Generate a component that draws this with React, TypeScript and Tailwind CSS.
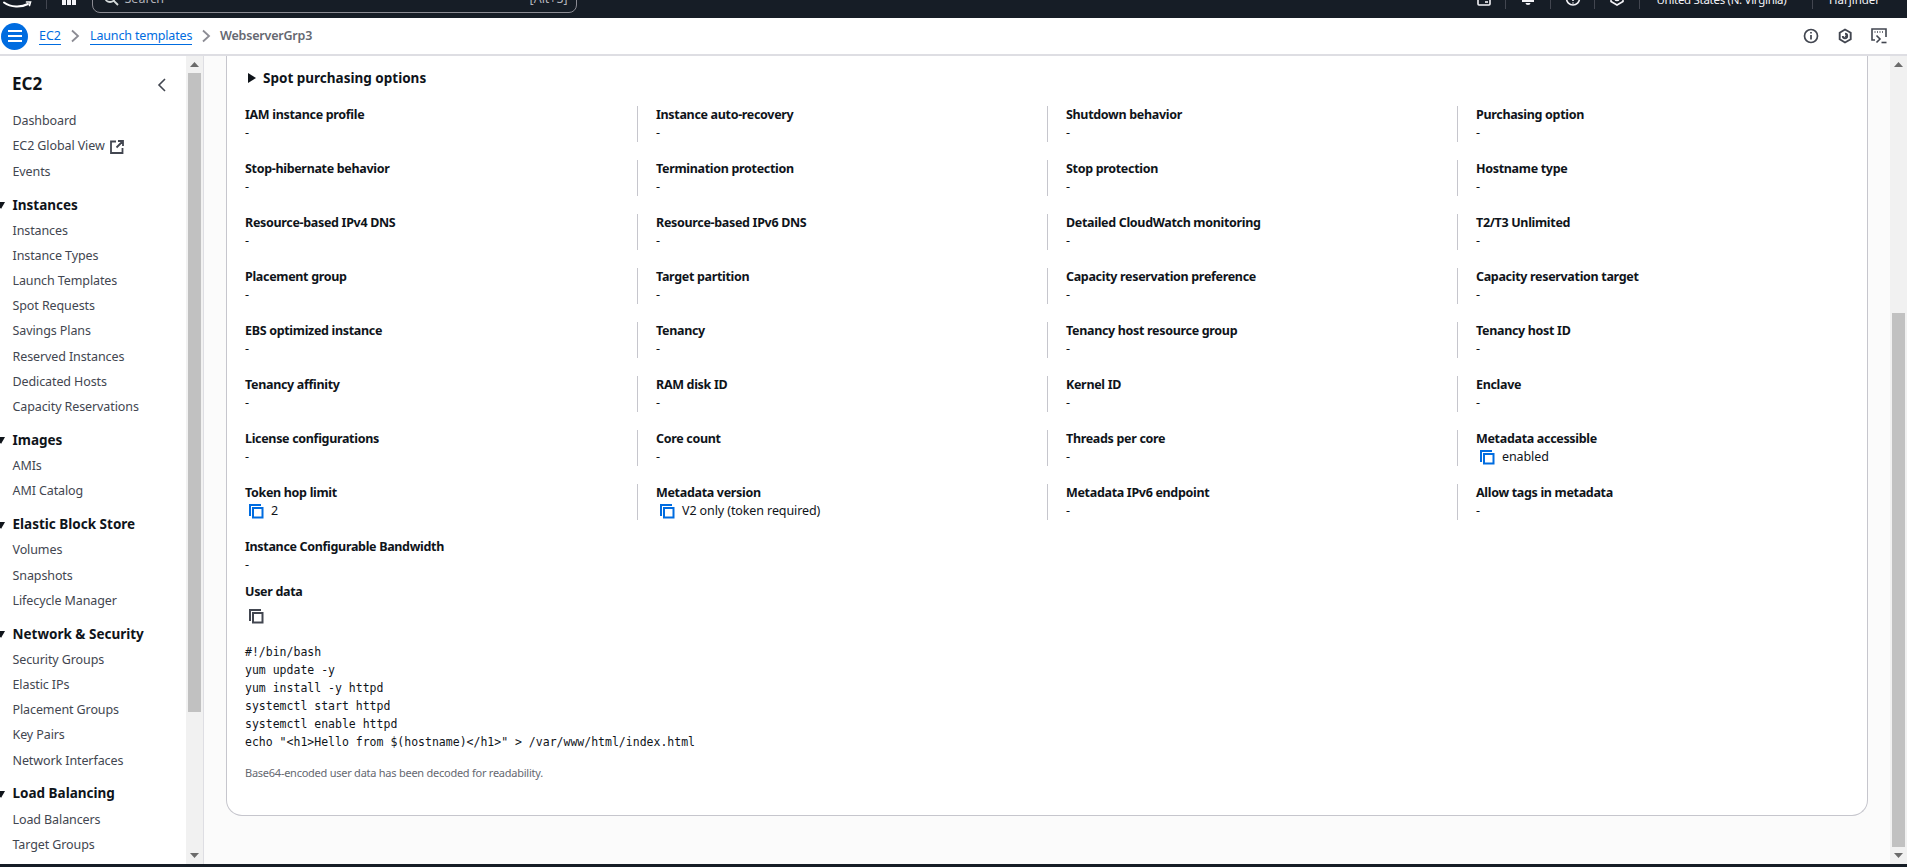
import React from "react";

const sans = "font-['Noto_Sans','Open_Sans',sans-serif]";

const Copy = ({ color = "#006ce0" }: { color?: string }) => (
  <svg width="16" height="16" viewBox="0 0 16 16" fill="none" stroke={color} strokeWidth="2" className="shrink-0">
    <path d="M2 13V2h11" />
    <rect x="5" y="5" width="9.5" height="9.5" />
  </svg>
);

const Tri = () => (
  <svg width="8" height="8" viewBox="0 0 8 8" className="absolute left-[-3px] top-[9px]">
    <path d="M0 1h8L4 8z" fill="#0f141a" />
  </svg>
);

const Arrow = ({ up }: { up?: boolean }) => (
  <svg width="9" height="5" viewBox="0 0 9 5">
    <path d={up ? "M4.5 0L9 5H0z" : "M0 0h9L4.5 5z"} fill="#6b6b6b" />
  </svg>
);

const Chevron = () => (
  <svg width="10" height="14" viewBox="0 0 10 14" fill="none" stroke="#8c8c94" strokeWidth="1.8" className="shrink-0">
    <path d="M2 1.5L8 7l-6 5.5" />
  </svg>
);

const NavItem = ({ label, ext }: { label: string; ext?: boolean }) => (
  <div className="flex h-[25.2px] items-center gap-[5px] whitespace-nowrap pl-[12.5px] text-[12.5px] tracking-[-0.1px] text-[#424650]">
    {label}
    {ext && (
      <svg width="14" height="14" viewBox="0 0 14 14" fill="none" stroke="#424650" strokeWidth="1.8">
        <path d="M6 1.5H1v11.5h11.5V8M8 1h5v5M13 1L6.5 7.5" />
      </svg>
    )}
  </div>
);

const sections: { title: string; items: string[] }[] = [
  { title: "Instances", items: ["Instances", "Instance Types", "Launch Templates", "Spot Requests", "Savings Plans", "Reserved Instances", "Dedicated Hosts", "Capacity Reservations"] },
  { title: "Images", items: ["AMIs", "AMI Catalog"] },
  { title: "Elastic Block Store", items: ["Volumes", "Snapshots", "Lifecycle Manager"] },
  { title: "Network & Security", items: ["Security Groups", "Elastic IPs", "Placement Groups", "Key Pairs", "Network Interfaces"] },
  { title: "Load Balancing", items: ["Load Balancers", "Target Groups", "Trust Stores"] },
];

type Cell = { label: string; value?: string; copy?: boolean };

const cells: Cell[] = [
  { label: "IAM instance profile" }, { label: "Instance auto-recovery" }, { label: "Shutdown behavior" }, { label: "Purchasing option" },
  { label: "Stop-hibernate behavior" }, { label: "Termination protection" }, { label: "Stop protection" }, { label: "Hostname type" },
  { label: "Resource-based IPv4 DNS" }, { label: "Resource-based IPv6 DNS" }, { label: "Detailed CloudWatch monitoring" }, { label: "T2/T3 Unlimited" },
  { label: "Placement group" }, { label: "Target partition" }, { label: "Capacity reservation preference" }, { label: "Capacity reservation target" },
  { label: "EBS optimized instance" }, { label: "Tenancy" }, { label: "Tenancy host resource group" }, { label: "Tenancy host ID" },
  { label: "Tenancy affinity" }, { label: "RAM disk ID" }, { label: "Kernel ID" }, { label: "Enclave" },
  { label: "License configurations" }, { label: "Core count" }, { label: "Threads per core" }, { label: "Metadata accessible", value: "enabled", copy: true },
  { label: "Token hop limit", value: "2", copy: true }, { label: "Metadata version", value: "V2 only (token required)", copy: true }, { label: "Metadata IPv6 endpoint" }, { label: "Allow tags in metadata" },
  { label: "Instance Configurable Bandwidth" },
];

const Detail = ({ cell, index }: { cell: Cell; index: number }) => (
  <div className={index % 4 === 0 ? "h-[36px]" : "h-[36px] border-l border-[#c6c6cd] pl-[18px]"}>
    <div className="h-[18px] whitespace-nowrap text-[12.5px] font-bold leading-[18px] tracking-[-0.32px] text-[#0f141a]">{cell.label}</div>
    {cell.copy ? (
      <div className="flex h-[18px] items-center gap-[7px] pl-[3px] text-[12.5px] leading-[18px] tracking-[-0.1px] text-[#0f141a]">
        <Copy />
        {cell.value}
      </div>
    ) : (
      <div className="h-[18px] text-[12.5px] leading-[18px] text-[#0f141a]">-</div>
    )}
  </div>
);

const code = [
  "#!/bin/bash",
  "yum update -y",
  "yum install -y httpd",
  "systemctl start httpd",
  "systemctl enable httpd",
  'echo "<h1>Hello from $(hostname)</h1>" > /var/www/html/index.html',
];

const TopCell = ({ w, children }: { w: string; children: React.ReactNode }) => (
  <div className={`flex h-[22px] items-center justify-center border-r border-[#424650] ${w}`}>{children}</div>
);

export default function App() {
  return (
    <div className={`flex h-screen flex-col overflow-hidden bg-white ${sans}`}>
      {/* top navigation, scrolled mostly out of the photo */}
      <header className="h-[18px] shrink-0 overflow-hidden bg-[#161d26]">
        <div className="-mt-[17px] flex h-[30px] items-center text-[12.5px] text-[#d5dbdb]">
          <svg width="30" height="30" viewBox="0 -1 30 30" fill="none" className="ml-[2px] shrink-0">
            <path d="M2 18.5c7 5 17 5 24 1.5" stroke="#fff" strokeWidth="2" strokeLinecap="round" />
            <path d="M24.5 18h4l-1 3.5" stroke="#fff" strokeWidth="1.6" strokeLinecap="round" />
          </svg>
          <div className="ml-[13.5px] h-[22px] w-px bg-[#424650]" />
          <svg width="14" height="22" viewBox="0 0 14 22" fill="#f3f3f7" className="ml-[15px] shrink-0">
            <rect x="0" y="7" width="4" height="4" /><rect x="5" y="7" width="4" height="4" /><rect x="10" y="7" width="4" height="4" />
            <rect x="0" y="13" width="4" height="5" /><rect x="5" y="13" width="4" height="5" /><rect x="10" y="13" width="4" height="5" />
          </svg>
          <div className="ml-[16px] flex h-full w-[485px] items-center rounded-lg border border-[#8c8c94] pl-[10px] pr-[8px]">
            <svg width="16" height="16" viewBox="0 0 16 16" fill="none" stroke="#d5dbdb" strokeWidth="1.8">
              <circle cx="7" cy="7" r="5" />
              <path d="M10.5 10.5L15 15" />
            </svg>
            <span className="ml-[6px] mt-[3px] text-[#b4b4bb]">Search</span>
            <span className="ml-auto mt-[3px] text-[#b4b4bb]">[Alt+S]</span>
          </div>
          <TopCell w="ml-auto w-[43px]">
            <svg width="14" height="22" viewBox="0 -2 14 22" fill="none" stroke="#f3f3f7" strokeWidth="1.6"><rect x="1" y="4" width="12" height="12" rx="1" /><path d="M8 13h3" /></svg>
          </TopCell>
          <TopCell w="w-[45px]">
            <svg width="16" height="22" viewBox="0 -2 16 22" fill="#f3f3f7"><path d="M2 10h12v3H2z" /><path d="M5.5 14h5a2.5 2 0 0 1-5 0z" /></svg>
          </TopCell>
          <TopCell w="w-[44px]">
            <svg width="16" height="22" viewBox="0 -3.5 16 22" fill="none" stroke="#f3f3f7" strokeWidth="1.6"><circle cx="8" cy="8" r="6.5" /><path d="M8 9v1.5M8 12v1" /></svg>
          </TopCell>
          <TopCell w="w-[45px]">
            <svg width="16" height="22" viewBox="0 -3 16 22" fill="none" stroke="#f3f3f7" strokeWidth="1.6"><path d="M8 1.5l6 3.5v6.5l-6 3.5-6-3.5V5z" /><circle cx="8" cy="8.5" r="2" /></svg>
          </TopCell>
          <TopCell w="w-[173px]">
            <span className="mt-[3px] w-[127px] whitespace-nowrap text-[11.5px] tracking-[-0.3px] text-[#f3f3f7]">United States (N. Virginia)</span>
            <span className="ml-[6px] h-0 w-0 border-x-[3.5px] border-t-[4px] border-x-transparent border-t-[#f3f3f7]" />
          </TopCell>
          <div className="flex items-center pl-[16px] pr-[17px]">
            <span className="mt-[3px] w-[49px] text-[11.5px] text-[#f3f3f7]">Harjinder</span>
            <span className="ml-[6px] h-0 w-0 border-x-[3.5px] border-t-[4px] border-x-transparent border-t-[#f3f3f7]" />
          </div>
        </div>
      </header>

      {/* breadcrumb bar */}
      <div className="flex h-[38px] shrink-0 items-center border-b-2 border-[#dedee3] bg-white">
        <div className="ml-px flex h-[27px] w-[27px] flex-col items-center justify-center gap-[3px] rounded-full bg-[#006ce0]">
          <span className="h-[2px] w-[14px] bg-white" />
          <span className="h-[2px] w-[14px] bg-white" />
          <span className="h-[2px] w-[14px] bg-white" />
        </div>
        <span className="ml-[11px] w-[22px] border-b border-[#006ce0] text-[12.5px] leading-[16px] text-[#006ce0]">EC2</span>
        <span className="ml-[9px]"><Chevron /></span>
        <span className="ml-[10px] w-[102px] whitespace-nowrap border-b border-[#006ce0] text-[12.5px] leading-[16px] tracking-[-0.15px] text-[#006ce0]">Launch templates</span>
        <span className="ml-[9px]"><Chevron /></span>
        <span className="ml-[9px] whitespace-nowrap text-[12.5px] font-semibold tracking-[-0.2px] text-[#656871]">WebserverGrp3</span>
        <div className="ml-auto flex items-center gap-[16px] pr-[19px]">
          <svg width="18" height="18" viewBox="0 0 18 18" fill="none" stroke="#424650" strokeWidth="1.7">
            <circle cx="9" cy="9" r="6.5" />
            <path d="M9 8v4.5M9 5v1.6" />
          </svg>
          <svg width="18" height="18" viewBox="0 0 18 18" fill="none" stroke="#424650" strokeWidth="1.9">
            <path d="M9 2.5l5.7 3.2v6.6L9 15.5l-5.3-3.2V5.7z" />
            <path d="M6.8 9a2.2 2.2 0 1 0 2.2-2.2M9 9l2.2 1" />
          </svg>
          <svg width="18" height="18" viewBox="0 0 18 18" fill="none" stroke="#424650" strokeWidth="1.6">
            <path d="M5 13H2V2h14v8" />
            <path d="M4.5 5h1M7 5h1M9.5 5h1M12 5h1" />
            <path d="M6.5 8.5l3.5 3.5-3.5 3.5" />
            <path d="M11.5 15.5h5" />
          </svg>
        </div>
      </div>

      <div className="flex min-h-0 flex-1">
        {/* side navigation */}
        <aside className="w-[186px] shrink-0 overflow-hidden bg-white">
          <div className="flex h-[40px] items-end justify-between pl-[12px] pr-[19px]">
            <span className="text-[17px] font-bold leading-[24px] text-[#0f141a]">EC2</span>
            <svg width="10" height="16" viewBox="0 0 10 16" fill="none" stroke="#424650" strokeWidth="1.6" className="mb-[3px]">
              <path d="M8 2L2 8l6 6" />
            </svg>
          </div>
          <div className="mt-[13px]">
            <NavItem label="Dashboard" />
            <NavItem label="EC2 Global View" ext />
            <NavItem label="Events" />
          </div>
          {sections.map((s) => (
            <section key={s.title} className="mt-[7.5px]">
              <div className="relative flex h-[26.4px] items-center whitespace-nowrap pb-[1.2px] pl-[12.5px] text-[13.5px] font-bold text-[#0f141a]">
                <Tri />
                {s.title}
              </div>
              {s.items.map((i) => (
                <NavItem key={i} label={i} />
              ))}
            </section>
          ))}
        </aside>

        {/* side navigation scrollbar */}
        <div className="flex w-[17px] shrink-0 flex-col items-center bg-[#f1f1f1]">
          <div className="flex h-[17px] items-center justify-center"><Arrow up /></div>
          <div className="h-[639px] w-[13px] bg-[#c1c1c1]" />
          <div className="flex flex-1 items-end justify-center pb-[6px]"><Arrow /></div>
        </div>

        {/* main content */}
        <main className="flex min-w-0 flex-1 border-l border-[#dedee3] bg-[#fbfbfb]">
          <div className="min-w-0 flex-1 pl-[22px] pr-[22px]">
            <div className="w-full rounded-b-2xl border-x border-b border-[#c6c6cd] bg-white pb-[33px] pl-[18px] pt-[13px]">
              <div className="mb-[19px] flex h-[18px] items-center gap-[7px] text-[13.5px] font-bold text-[#0f141a]">
                <svg width="8" height="10" viewBox="0 0 8 10" className="ml-[3px]"><path d="M0 0l8 5-8 5z" fill="#0f141a" /></svg>
                Spot purchasing options
              </div>
              <div className="grid grid-cols-[392px_410px_410px_1fr] gap-y-[18px]">
                {cells.map((c, i) => (
                  <Detail key={c.label} cell={c} index={i} />
                ))}
              </div>
              <div className="mt-[9px] h-[18px] text-[12.5px] font-bold leading-[18px] tracking-[-0.32px] text-[#0f141a]">User data</div>
              <div className="mt-[7px] pl-[3px]"><Copy color="#424650" /></div>
              <pre className="mt-[19px] font-['DejaVu_Sans_Mono',monospace] text-[11.5px] leading-[18px] text-[#0f141a]">
                {code.join("\n")}
              </pre>
              <div className="mt-[13px] h-[18px] text-[11px] leading-[18px] tracking-[-0.25px] text-[#656871]">Base64-encoded user data has been decoded for readability.</div>
            </div>
          </div>
          {/* main scrollbar */}
          <div className="flex w-[17px] shrink-0 flex-col items-center bg-[#f1f1f1]">
            <div className="flex h-[17px] items-center justify-center"><Arrow up /></div>
            <div className="mt-[240px] h-[534px] w-[13px] bg-[#c1c1c1]" />
            <div className="flex flex-1 items-end justify-center pb-[6px]"><Arrow /></div>
          </div>
        </main>
      </div>

      <div className="h-[3px] shrink-0 bg-[#161d26]" />
    </div>
  );
}
